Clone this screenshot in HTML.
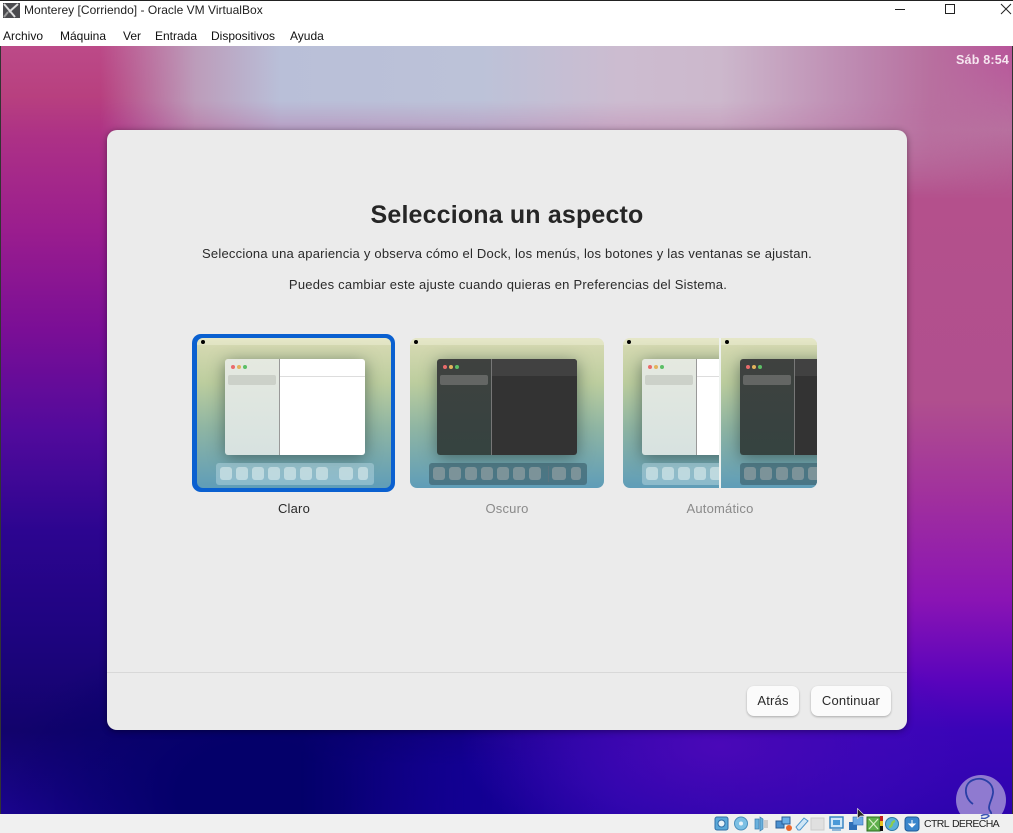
<!DOCTYPE html>
<html><head><meta charset="utf-8">
<style>
html,body{margin:0;padding:0;width:1013px;height:833px;overflow:hidden;background:#fff;font-family:"Liberation Sans",sans-serif}
#root{position:absolute;left:0;top:0;width:1013px;height:833px;overflow:hidden}
.abs{position:absolute}
#title{left:24px;top:2px;font-size:12px;line-height:16px;color:#222;white-space:nowrap;letter-spacing:.02px}
.mi{position:absolute;top:28px;font-size:12px;line-height:16px;color:#111;white-space:nowrap}
#desk{left:0;top:46px;width:1013px;height:768px;overflow:hidden;background:linear-gradient(#bc4a88 0,#b8407f 50px,#ad3186 90px,#9a1d8e 185px,#7a0e96 285px,#520a9c 385px,#2c0590 485px,#1e0480 585px,#12036c 685px,#1c0490 768px)}
.lay{position:absolute;left:0;top:0;width:1013px;height:768px}
#lr{background:linear-gradient(#b8549a 0,#b8709f 84px,#b4508c 154px,#b04f8e 354px,#a02f9e 454px,#8a14b4 554px,#5a04bc 634px,#3a04b8 684px,#2e04ae 768px);-webkit-mask-image:linear-gradient(to right,transparent 350px,#000 860px);mask-image:linear-gradient(to right,transparent 350px,#000 860px)}
#ln{background:radial-gradient(ellipse 270px 170px at 260px 750px,#04006a 0,#04006a 30%,rgba(4,0,106,.6) 62%,rgba(4,0,106,0) 100%)}
#lb{background:linear-gradient(to right,rgba(20,0,144,0) 300px,#120092 470px,rgba(32,4,168,.5) 620px,rgba(32,4,168,0) 760px);-webkit-mask-image:linear-gradient(transparent 640px,#000 720px);mask-image:linear-gradient(transparent 640px,#000 720px)}
#lp{background:radial-gradient(ellipse 260px 120px at 720px 700px,#4a08b8 0,rgba(64,8,184,.6) 55%,rgba(64,8,184,0) 100%)}
#lt{height:150px;background:linear-gradient(to right,rgba(190,80,135,0) 0,rgba(190,80,135,0) 100px,#bc9cba 195px,#b9bfd8 280px,#bcc2d8 480px,#ccbcd0 620px,#ccb8cc 720px,#bd88b0 860px,#b8709f 930px,rgba(184,80,140,0) 1013px);-webkit-mask-image:linear-gradient(#000 0,#000 55px,rgba(0,0,0,.75) 85px,transparent 150px);mask-image:linear-gradient(#000 0,#000 55px,rgba(0,0,0,.75) 85px,transparent 150px)}
#clock{left:956px;top:7px;font-size:12.5px;font-weight:bold;line-height:15px;color:#f6e6f0;white-space:nowrap;letter-spacing:.2px}
#dlg{left:107px;top:130px;width:800px;height:600px;background:#ebebeb;border-radius:10px;box-shadow:0 1px 7px rgba(0,0,0,.42)}
h1{position:absolute;left:0;width:800px;top:70px;margin:0;text-align:center;font-size:25px;line-height:31px;font-weight:bold;color:#262626;letter-spacing:.16px}
.p{position:absolute;left:0;width:800px;text-align:center;font-size:13px;line-height:16px;color:#2a2a2a;letter-spacing:.22px}
#sep{left:0;top:542px;width:800px;height:1px;background:#d8d8d8}
.btn{position:absolute;top:556px;height:30px;background:#fbfbfb;border-radius:7px;box-shadow:0 1px 2px rgba(0,0,0,.28);font-size:13px;line-height:30px;text-align:center;color:#2a2a2a;letter-spacing:.2px}
.lbl{position:absolute;top:371px;font-size:13px;line-height:16px;text-align:center;color:#8a8a8a;letter-spacing:.2px}
.th{position:absolute;overflow:hidden;border-radius:7px;background:linear-gradient(#dde0bc 0,#d3d8b0 6%,#bccd9e 30%,#8fb5a3 60%,#5f9db8 100%)}
.bar{position:absolute;left:0;top:0;right:0;height:7px;background:rgba(240,240,215,.45)}
.apple{position:absolute;left:4px;top:2px;width:4px;height:4px;background:#000;border-radius:50%}
.w{position:absolute;left:28px;top:21px;width:140px;height:96px;border-radius:3px;overflow:hidden;box-shadow:0 3px 16px rgba(30,50,50,.55)}
.side{position:absolute;left:0;top:0;width:54px;height:96px;background:linear-gradient(#e5e9e0,#d7e2e0);border-right:1px solid #999}
.main{position:absolute;left:55px;top:0;right:0;bottom:0;background:#fff}
.head{position:absolute;left:55px;top:0;right:0;height:17px;border-bottom:1px solid #ddd}
.sel{position:absolute;left:3px;top:16px;width:48px;height:10px;border-radius:2px;background:#ccd1c9}
.dot{position:absolute;top:6px;width:4px;height:4px;border-radius:50%}
.d1{left:6px;background:#e96b6b}.d2{left:12px;background:#e3b35c}.d3{left:18px;background:#5cbf66}
.dark .w{left:27px}
.dark .side{background:linear-gradient(#3f413f,#354340);border-right:1px solid #777}
.dark .main{background:#333}
.dark .head{background:#414141;border-bottom:0}
.dark .sel{background:#646664}
.dock{position:absolute;left:19px;top:125px;width:158px;height:22px;border-radius:3px;background:rgba(175,210,220,.55)}
.dark .dock{background:rgba(60,95,108,.65)}
.ic{position:absolute;top:4px;width:12px;height:13px;border-radius:3px;background:rgba(210,230,232,.7)}
.dark .ic{background:rgba(145,160,162,.7)}
.vt{position:absolute;left:0;top:814px;width:1013px;height:19px;background:#f0f0f0;overflow:hidden}
</style></head>
<body><div id="root">
<div class="abs" style="left:0;top:0;width:1013px;height:1px;background:#222"></div>
<svg class="abs" style="left:3px;top:3px" width="17" height="15" viewBox="0 0 17 15"><rect width="17" height="15" fill="#4a4a4e"/><path d="M1 1l11 13M15 1L6 9" stroke="#ddd" stroke-width="2" fill="none"/><path d="M1 14l4-5" stroke="#999" stroke-width="2"/></svg>
<div class="abs" id="title">Monterey [Corriendo] - Oracle VM VirtualBox</div>
<svg class="abs" style="left:895px;top:0" width="118" height="18" viewBox="0 0 118 18"><path d="M0 9.5h10" stroke="#222" stroke-width="1"/><rect x="50.5" y="4.5" width="9" height="9" fill="none" stroke="#222"/><path d="M106 4l10 10M116 4l-10 10" stroke="#222" stroke-width="1"/></svg>
<div class="mi" style="left:3px">Archivo</div>
<div class="mi" style="left:60px">Máquina</div>
<div class="mi" style="left:123px">Ver</div>
<div class="mi" style="left:155px">Entrada</div>
<div class="mi" style="left:211px">Dispositivos</div>
<div class="mi" style="left:290px">Ayuda</div>

<div class="abs" id="desk">
<div class="lay" id="lr"></div>
<div class="lay" id="ln"></div>
<div class="lay" id="lb"></div>
<div class="lay" id="lp"></div>
<div class="lay" id="lt"></div>
<div class="abs" id="clock">Sáb 8:54</div>
<svg class="abs" style="left:950px;top:725px" width="63" height="43" viewBox="0 0 63 43"><circle cx="31" cy="29" r="25" fill="#8f7ad0"/><path d="M23 33C14 27 13 13 23 9c10-4 21 3 20 13-1 7-4 10-4 15 0 3 3 4 2 6" fill="none" stroke="#2a3fa6" stroke-width="1.8"/></svg>
<div class="abs" style="left:0;top:0;width:1px;height:768px;background:#333"></div>
<div class="abs" style="left:1012px;top:0;width:1px;height:768px;background:#333"></div>
</div>

<div class="abs" id="dlg">
<h1>Selecciona un aspecto</h1>
<div class="p" style="top:116px">Selecciona una apariencia y observa cómo el Dock, los menús, los botones y las ventanas se ajustan.</div>
<div class="p" style="top:147px;left:1px">Puedes cambiar este ajuste cuando quieras en Preferencias del Sistema.</div>

<!-- Claro -->
<div class="abs" style="left:85px;top:204px;width:203px;height:158px;border-radius:9px;background:#0a60d0"></div>
<div class="th" style="left:90px;top:208px;width:194px;height:150px;border-radius:6px">
<div class="bar"></div><div class="apple"></div>
<div class="w"><div class="side"></div><div class="main"></div><div class="head"></div><div class="sel"></div><i class="dot d1"></i><i class="dot d2"></i><i class="dot d3"></i></div>
<div class="dock"><i class="ic" style="left:4px"></i><i class="ic" style="left:20px"></i><i class="ic" style="left:36px"></i><i class="ic" style="left:52px"></i><i class="ic" style="left:68px"></i><i class="ic" style="left:84px"></i><i class="ic" style="left:100px"></i><i class="ic" style="left:123px;width:14px"></i><i class="ic" style="left:142px;width:10px"></i></div>
</div>
<div class="lbl" style="left:87px;width:200px;color:#2a2a2a">Claro</div>

<!-- Oscuro -->
<div class="th dark" style="left:303px;top:208px;width:194px;height:150px">
<div class="bar"></div><div class="apple"></div>
<div class="w"><div class="side"></div><div class="main"></div><div class="head"></div><div class="sel"></div><i class="dot d1"></i><i class="dot d2"></i><i class="dot d3"></i></div>
<div class="dock"><i class="ic" style="left:4px"></i><i class="ic" style="left:20px"></i><i class="ic" style="left:36px"></i><i class="ic" style="left:52px"></i><i class="ic" style="left:68px"></i><i class="ic" style="left:84px"></i><i class="ic" style="left:100px"></i><i style="position:absolute;left:119px;top:3px;width:1px;height:16px;background:#5b7480"></i><i class="ic" style="left:123px;width:14px"></i><i class="ic" style="left:142px;width:10px"></i></div>
</div>
<div class="lbl" style="left:300px;width:200px">Oscuro</div>

<!-- Automatico -->
<div class="th" style="left:516px;top:208px;width:194px;height:150px">
<div class="bar"></div><div class="apple"></div>
<div class="w" style="left:19px"><div class="side"></div><div class="main"></div><div class="head"></div><div class="sel"></div><i class="dot d1"></i><i class="dot d2"></i><i class="dot d3"></i></div>
<div class="dock" style="left:19px"><i class="ic" style="left:4px"></i><i class="ic" style="left:20px"></i><i class="ic" style="left:36px"></i><i class="ic" style="left:52px"></i><i class="ic" style="left:68px"></i></div>
<div class="th dark" style="left:96px;top:0;width:98px;height:150px;border-radius:0;border-left:2px solid #eef2ef">
<div class="bar"></div><div class="apple"></div>
<div class="w" style="left:19px"><div class="side"></div><div class="main"></div><div class="head"></div><div class="sel"></div><i class="dot d1"></i><i class="dot d2"></i><i class="dot d3"></i></div>
<div class="dock" style="left:19px"><i class="ic" style="left:4px"></i><i class="ic" style="left:20px"></i><i class="ic" style="left:36px"></i><i class="ic" style="left:52px"></i><i class="ic" style="left:68px"></i></div>
</div>
</div>
<div class="lbl" style="left:513px;width:200px">Automático</div>

<div class="abs" id="sep"></div>
<div class="btn" style="left:640px;width:52px">Atrás</div>
<div class="btn" style="left:704px;width:80px">Continuar</div>
</div>

<div class="vt">
<svg class="abs" style="left:714px;top:1px" width="210" height="17" viewBox="0 0 210 17">
<rect x="1" y="2" width="13" height="13" rx="2" fill="#5aa8d8" stroke="#2f6ea6"/><circle cx="7.5" cy="8.5" r="3.5" fill="#e8f2f8" stroke="#2f6ea6"/>
<circle cx="27" cy="8.5" r="6.5" fill="#7cc0e4" stroke="#4a8fbc"/><circle cx="27" cy="8.5" r="2" fill="#eaf4fa"/>
<path d="M41 4h4v10h-4zM46 2l3 2v10l-3 2z" fill="#6ab0dc" stroke="#3b7fb0" stroke-width=".7"/><rect x="50" y="5" width="4" height="8" fill="#ccc"/>
<rect x="62" y="6" width="8" height="7" fill="#4a90d0" stroke="#2a5e96"/><rect x="68" y="2" width="8" height="7" fill="#6cb0e6" stroke="#2a5e96"/><circle cx="75" cy="13" r="3" fill="#e8672c"/>
<path d="M84 15l-2-3 8-9 4 3-8 9z" fill="#cfe6f6" stroke="#4f96cc"/>
<rect x="97" y="3" width="13" height="12" fill="#e0e0e0" stroke="#ccc"/>
<rect x="116" y="2" width="13" height="11" fill="#cfe8f8" stroke="#2f7ec0" stroke-width="1.4"/><rect x="119" y="5" width="7" height="5" fill="#4a9ad8"/><path d="M118 15h9" stroke="#2f7ec0"/>
<rect x="135" y="7" width="8" height="8" fill="#2f6fb8"/><rect x="139" y="2" width="10" height="8" fill="#6ca8e4" stroke="#2f6fb8" stroke-width=".6"/>
<rect x="153" y="2" width="13" height="14" fill="#5fb04c" stroke="#2c6a20"/><path d="M155 4l9 10M164 4l-9 10" stroke="#d8f0c8" stroke-width="1.2"/>
<rect x="166" y="1" width="3" height="15" fill="#d88"/><rect x="166" y="1" width="3" height="5" fill="#c02020"/><rect x="166" y="6" width="3" height="5" fill="#e8c020"/><rect x="166" y="11" width="3" height="5" fill="#111"/>
<circle cx="178" cy="9" r="6.5" fill="#5ab0d8" stroke="#2f7aa8"/><path d="M175 12c5-1 1-5 6-6" stroke="#8ccc50" stroke-width="2.4" fill="none"/>
<rect x="191" y="2" width="14" height="14" rx="3" fill="#3a86cc" stroke="#1f5a98"/><path d="M198 5v5M195 9h6l-3 3z" stroke="#fff" fill="#fff"/>
</svg>
<div class="abs" style="left:924px;top:4px;font-size:10.5px;line-height:13px;color:#222;white-space:nowrap;letter-spacing:-.6px;word-spacing:1px">CTRL DERECHA</div>
<svg class="abs" style="left:975px;top:0" width="20" height="5" viewBox="0 0 20 5"><path d="M6 2c3-2 7-2 8 0-2 2-5 3-8 2" fill="none" stroke="#3a56b4" stroke-width="1.5"/></svg>
</div>
<svg class="abs" style="left:857px;top:808px" width="9" height="13" viewBox="0 0 9 13"><path d="M.5.5v10l3-2.5h4.5z" fill="#222" stroke="#ddd" stroke-width=".7"/></svg>
</div></body></html>
